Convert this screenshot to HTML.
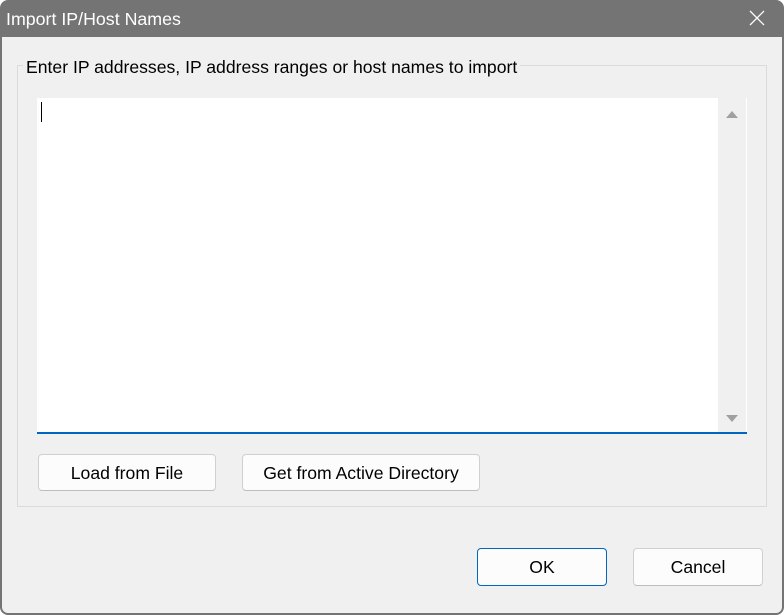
<!DOCTYPE html>
<html><head><meta charset="utf-8"><style>
*{box-sizing:border-box;margin:0;padding:0}
html,body{width:784px;height:615px;overflow:hidden;background:#fff}
body{font-family:"Liberation Sans",sans-serif;font-size:16px;color:#000;position:relative}
.win{position:absolute;left:0;top:0;width:784px;height:615px;background:#747474;border-radius:8px 8px 8px 8px}
.title{position:absolute;left:6px;top:9px;color:#fff;font-size:17.8px}
.close{position:absolute;left:748px;top:9px}
.body{position:absolute;left:2px;top:37px;width:780px;height:576px;background:#f0f0f0;border-radius:0 0 6px 6px}
.group{position:absolute;left:17px;top:65px;width:750px;height:442px;border:1px solid #dcdcdc}
.legend{position:absolute;left:23px;top:57px;background:#f0f0f0;padding:0 3px;font-size:17.6px}
.ta{position:absolute;left:37px;top:98px;width:710px;height:336px;background:#fff;border-bottom:2px solid #0067c0}
.caret{position:absolute;left:41px;top:102px;width:1px;height:20px;background:#000}
.sb{position:absolute;left:718px;top:98px;width:28px;height:334px;background:#f0f0f0}
.btn{position:absolute;background:#fcfcfc;border:1px solid #d0d0d0;border-bottom-color:#bdbdbd;border-radius:4px;text-align:center;font-size:17.6px;line-height:37px}
</style></head><body>
<div class="win"></div>
<div class="title">Import IP/Host Names</div>
<svg class="close" width="18" height="18" viewBox="0 0 18 18"><path d="M2 2L16 16M16 2L2 16" stroke="#fff" stroke-width="1.3"/></svg>
<div class="body"></div>
<div class="group"></div>
<div class="legend">Enter IP addresses, IP address ranges or host names to import</div>
<div class="ta"></div>
<div class="caret"></div>
<div class="sb"><svg width="28" height="334"><path d="M8 20L14 13L20 20Z" fill="#a0a0a0"/><path d="M8 317L14 324L20 317Z" fill="#a0a0a0"/></svg></div>
<div class="btn" style="left:38px;top:454px;width:178px;height:37px">Load from File</div>
<div class="btn" style="left:242px;top:454px;width:238px;height:37px">Get from Active Directory</div>
<div class="btn" style="left:477px;top:548px;width:130px;height:38px;border:1px solid #0067c0">OK</div>
<div class="btn" style="left:633px;top:548px;width:130px;height:38px">Cancel</div>
</body></html>
